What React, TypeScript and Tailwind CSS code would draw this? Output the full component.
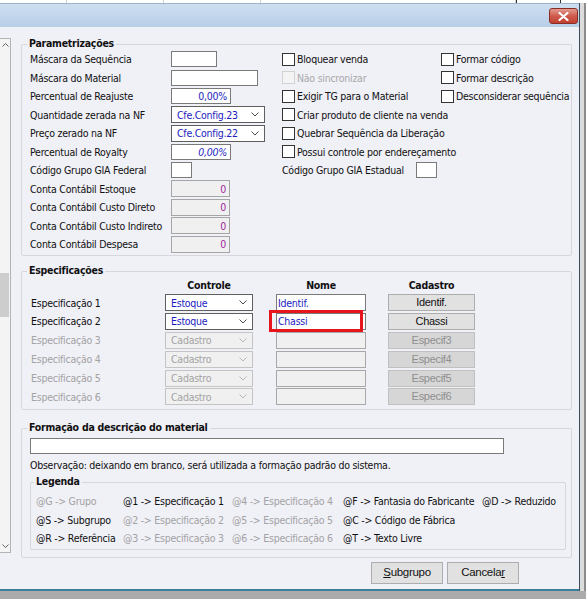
import React from 'react';

// chevron used by the combo boxes
const Chevron = ({ color = '#4a4a4a' }: { color?: string }) => (
  <svg width="8" height="5" viewBox="0 0 8 5" className="shrink-0">
    <path d="M0.5 0.5 L4 4 L7.5 0.5" fill="none" stroke={color} strokeWidth="1" />
  </svg>
);

const TextBox = ({ className = '', children }: { className?: string; children?: React.ReactNode }) => (
  <div className={`h-[16px] border border-[#7a7a7a] flex items-center px-[3px] ${className}`}>{children}</div>
);

const Combo = ({ className = '', value, disabled }: { className?: string; value: string; disabled?: boolean }) => (
  <div
    className={`h-[17px] border flex items-center justify-between pl-[5px] pr-[5px] ${
      disabled ? 'border-[#c4c4c4] bg-[#f0f0f0] text-[#a3a3a3]' : 'border-[#5f5f5f] bg-white text-[#1c1cc0]'
    } ${className}`}
  >
    <span>{value}</span>
    <Chevron color={disabled ? '#b8b8b8' : '#4a4a4a'} />
  </div>
);

const Check = ({ label, disabled }: { label: string; disabled?: boolean }) => (
  <div className="flex items-center gap-[2px] whitespace-nowrap">
    <span
      className={`w-[13px] h-[13px] border ${disabled ? 'border-[#d2d2d2] bg-[#f4f4f4]' : 'border-[#333333] bg-white'}`}
    />
    <span className={disabled ? 'text-[#a8a8a8]' : ''}>{label}</span>
  </div>
);

const GroupTitle = ({ children, className = '' }: { children: React.ReactNode; className?: string }) => (
  <div className={`-mt-[8px] px-[2px] w-fit h-[13px] leading-[13px] bg-[#f0f0f7] font-bold ${className}`}>
    {children}
  </div>
);

const conta = 'w-[59px] h-[17px] bg-[#f0f0f0] border-[#a5a5a5] justify-end text-[#a01ca0]';

const paramRows: { label: string; ctl: React.ReactNode }[] = [
  { label: 'Máscara da Sequência', ctl: <TextBox className="w-[46px] bg-white" /> },
  { label: 'Máscara do Material', ctl: <TextBox className="w-[87px] bg-white" /> },
  {
    label: 'Percentual de Reajuste',
    ctl: <TextBox className="w-[60px] bg-white justify-end text-[#1c1cc0]">0,00%</TextBox>,
  },
  { label: 'Quantidade zerada na NF', ctl: <Combo className="w-[94px]" value="Cfe.Config.23" /> },
  { label: 'Preço zerado na NF', ctl: <Combo className="w-[94px]" value="Cfe.Config.22" /> },
  {
    label: 'Percentual de Royalty',
    ctl: <TextBox className="w-[60px] bg-white justify-end text-[#1c1cc0] italic">0,00%</TextBox>,
  },
  { label: 'Código Grupo GIA Federal', ctl: <TextBox className="w-[21px] bg-white" /> },
  { label: 'Conta Contábil Estoque', ctl: <TextBox className={conta}>0</TextBox> },
  { label: 'Conta Contábil Custo Direto', ctl: <TextBox className={conta}>0</TextBox> },
  { label: 'Conta Contábil Custo Indireto', ctl: <TextBox className={conta}>0</TextBox> },
  { label: 'Conta Contábil Despesa', ctl: <TextBox className={conta}>0</TextBox> },
];

const specs = [
  { n: 1, ctl: 'Estoque', name: 'Identif.', btn: 'Identif.', on: true },
  { n: 2, ctl: 'Estoque', name: 'Chassi', btn: 'Chassi', on: true },
  { n: 3, ctl: 'Cadastro', name: '', btn: 'Especif3', on: false },
  { n: 4, ctl: 'Cadastro', name: '', btn: 'Especif4', on: false },
  { n: 5, ctl: 'Cadastro', name: '', btn: 'Especif5', on: false },
  { n: 6, ctl: 'Cadastro', name: '', btn: 'Especif6', on: false },
];

// legend: [text, active]
const legend: [string, boolean][][] = [
  [
    ['@G -> Grupo', false],
    ['@1 -> Especificação 1', true],
    ['@4 -> Especificação 4', false],
    ['@F -> Fantasia do Fabricante', true],
    ['@D -> Reduzido', true],
  ],
  [
    ['@S -> Subgrupo', true],
    ['@2 -> Especificação 2', false],
    ['@5 -> Especificação 5', false],
    ['@C -> Código de Fábrica', true],
    ['', true],
  ],
  [
    ['@R -> Referência', true],
    ['@3 -> Especificação 3', false],
    ['@6 -> Especificação 6', false],
    ['@T -> Texto Livre', true],
    ['', true],
  ],
];
const legendCols = ['w-[87px]', 'w-[109px]', 'w-[111px]', 'w-[139px]', 'flex-1'];

export default function App() {
  return (
    <div className="w-[586px] h-[599px] bg-[#ababab] overflow-hidden font-['DejaVu_Sans_Condensed','DejaVu_Sans',sans-serif] text-[10.5px] tracking-[-0.25px] leading-none text-[#111]">
      {/* background window peeking above the dialog */}
      <div className="h-[3px] bg-white flex">
        <div className="w-[67px] border-r border-[#d0d0d0]" />
        <div className="w-[97px] border-r border-[#d0d0d0]" />
        <div className="w-[97px] border-r border-[#d0d0d0]" />
        <div className="w-[255px] border-r border-[#d0d0d0]" />
        <div className="w-[45px] border-x border-[#333]" />
      </div>

      <div className="flex">
        <div className="w-[580px] h-[588px] border-r border-[#3e4d5e] flex flex-col">
          {/* title bar */}
          <div className="h-[24px] bg-linear-to-b from-[#cddef1] to-[#b8cfe8] border-t border-[#9fb4cc] flex items-start justify-end pr-[1px] pt-[4px]">
            <div className="w-[29px] h-[16px] rounded-[3px] border border-[#8a2d25] bg-linear-to-b from-[#e3998f] via-[#cf5b4e] to-[#c0402f] flex items-center justify-center">
              <svg width="11" height="9" viewBox="0 0 11 9">
                <path d="M1.5 1 L9.5 8 M9.5 1 L1.5 8" stroke="white" strokeWidth="2.2" strokeLinecap="round" />
              </svg>
            </div>
          </div>

          {/* client area */}
          <div className="flex-1 bg-[#f0f0f7] flex border-b-[2px] border-[#3b7f9b]">
            {/* list scrollbar on the left */}
            <div className="w-[11px] mt-[11px] h-[515px] border-y border-r border-[#b4b4b4] bg-[#f4f4f4] flex flex-col items-center py-[4px]">
              <svg width="7" height="4" viewBox="0 0 7 4" className="shrink-0">
                <path d="M0.5 3.5 L3.5 0.5 L6.5 3.5" fill="none" stroke="#606060" />
              </svg>
              <div className="w-[9px] h-[44px] mt-[226px] bg-[#cdcdcd] self-start shrink-0" />
              <div className="flex-1" />
              <svg width="7" height="4" viewBox="0 0 7 4" className="shrink-0">
                <path d="M0.5 0.5 L3.5 3.5 L6.5 0.5" fill="none" stroke="#606060" />
              </svg>
            </div>

            <div className="flex-1 pl-[10px] pr-[7px]">
              {/* Parametrizações */}
              <div className="mt-[17px] border border-[#d6d6dc] rounded-[2px] pl-[8px] pb-[1px]">
                <GroupTitle className="-ml-[3px]">Parametrizações</GroupTitle>
                <div className="flex">
                  <div className="w-[252px]">
                    {paramRows.map((r) => (
                      <div key={r.label} className="h-[18.5px] flex items-center">
                        <span className="w-[141px] whitespace-nowrap">{r.label}</span>
                        {r.ctl}
                      </div>
                    ))}
                  </div>
                  <div className="flex-1">
                    <div className="h-[18.5px] flex items-center">
                      <div className="w-[159px]"><Check label="Bloquear venda" /></div>
                      <Check label="Formar código" />
                    </div>
                    <div className="h-[18.5px] flex items-center">
                      <div className="w-[159px]"><Check label="Não sincronizar" disabled /></div>
                      <Check label="Formar descrição" />
                    </div>
                    <div className="h-[18.5px] flex items-center">
                      <div className="w-[159px]"><Check label="Exigir TG para o Material" /></div>
                      <Check label="Desconsiderar sequência" />
                    </div>
                    <div className="h-[18.5px] flex items-center"><Check label="Criar produto de cliente na venda" /></div>
                    <div className="h-[18.5px] flex items-center"><Check label="Quebrar Sequência da Liberação" /></div>
                    <div className="h-[18.5px] flex items-center"><Check label="Possui controle por endereçamento" /></div>
                    <div className="h-[18.5px] flex items-center">
                      <span className="w-[134px] whitespace-nowrap">Código Grupo GIA Estadual</span>
                      <TextBox className="w-[21px] bg-white" />
                    </div>
                  </div>
                </div>
              </div>

              {/* Especificações */}
              <div className="mt-[15px] border border-[#d6d6dc] rounded-[2px] pl-[9px] pb-[3px]">
                <GroupTitle className="-ml-[4px]">Especificações</GroupTitle>
                <div className="h-[17px] flex items-center font-bold">
                  <span className="w-[134px]" />
                  <span className="w-[88px] text-center">Controle</span>
                  <span className="w-[23px]" />
                  <span className="w-[90px] text-center">Nome</span>
                  <span className="w-[22px]" />
                  <span className="w-[87px] text-center">Cadastro</span>
                </div>
                {specs.map((s) => (
                  <div key={s.n} className="h-[18.8px] flex items-center">
                    <span className={`w-[134px] ${s.on ? 'text-[#111]' : 'text-[#a3a3a3]'}`}>Especificação {s.n}</span>
                    <Combo className="w-[88px]" value={s.ctl} disabled={!s.on} />
                    <div className="w-[23px]" />
                    <div className="relative">
                      <div
                        className={`w-[90px] h-[17px] border flex items-center pl-[1px] ${
                          s.on ? 'border-[#7a7a7a] bg-white text-[#1c1cc0]' : 'border-[#a8a8a8] bg-[#f0f0f0]'
                        }`}
                      >
                        {s.name}
                      </div>
                      {s.n === 2 && (
                        <div className="absolute left-[-7px] top-[-3px] w-[94px] h-[22px] border-[3px] border-[#e8141b]" />
                      )}
                    </div>
                    <div className="w-[22px]" />
                    <div
                      className={`w-[87px] h-[17px] border flex items-center justify-center font-['Liberation_Sans_Narrow','Liberation_Sans',sans-serif] tracking-[-0.3px] text-[11px] ${
                        s.on ? 'border-[#adadad] bg-[#e1e1e1] text-[#111]' : 'border-[#c0c0c0] bg-[#d6d6d6] text-[#8f8f8f]'
                      }`}
                    >
                      {s.btn}
                    </div>
                  </div>
                ))}
              </div>

              {/* Formação da descrição do material */}
              <div className="mt-[18px] border border-[#d6d6dc] rounded-[2px] pl-[8px] pr-[5px] pb-[7px]">
                <GroupTitle className="-ml-[3px]">Formação da descrição do material</GroupTitle>
                <div className="mt-[4px] w-[474px] h-[16px] border border-[#7a7a7a] bg-white" />
                <div className="mt-[5px] h-[13px] leading-[13px] whitespace-nowrap">
                  Observação: deixando em branco, será utilizada a formação padrão do sistema.
                </div>
                <div className="mt-[10px] border border-[#d6d6dc] rounded-[2px] pl-[5px]">
                  <GroupTitle className="-ml-[2px]">Legenda</GroupTitle>
                  <div className="pt-[4px] pb-[1px]">
                    {legend.map((row, i) => (
                      <div key={i} className="h-[18.5px] flex items-center">
                        {row.map(([t, on], j) => (
                          <span key={j} className={`${legendCols[j]} whitespace-nowrap ${on ? 'text-[#111]' : 'text-[#a3a3a3]'}`}>
                            {t}
                          </span>
                        ))}
                      </div>
                    ))}
                  </div>
                </div>
              </div>

              {/* dialog buttons */}
              <div className="mt-[4px] flex justify-end gap-[4px] pr-[53px] font-['Liberation_Sans_Narrow','Liberation_Sans',sans-serif] tracking-[-0.3px] text-[11.5px]">
                <div className="w-[72px] h-[22px] border border-[#adadad] bg-[#e1e1e1] flex items-center justify-center">
                  <span><span className="underline">S</span>ubgrupo</span>
                </div>
                <div className="w-[72px] h-[22px] border border-[#adadad] bg-[#e1e1e1] flex items-center justify-center">
                  <span>Cancela<span className="underline">r</span></span>
                </div>
              </div>
            </div>
          </div>
        </div>
        <div className="w-[6px] h-[588px] bg-[#dcdcdc] border-r-[2px] border-[#8c8c8c]" />
      </div>
    </div>
  );
}
